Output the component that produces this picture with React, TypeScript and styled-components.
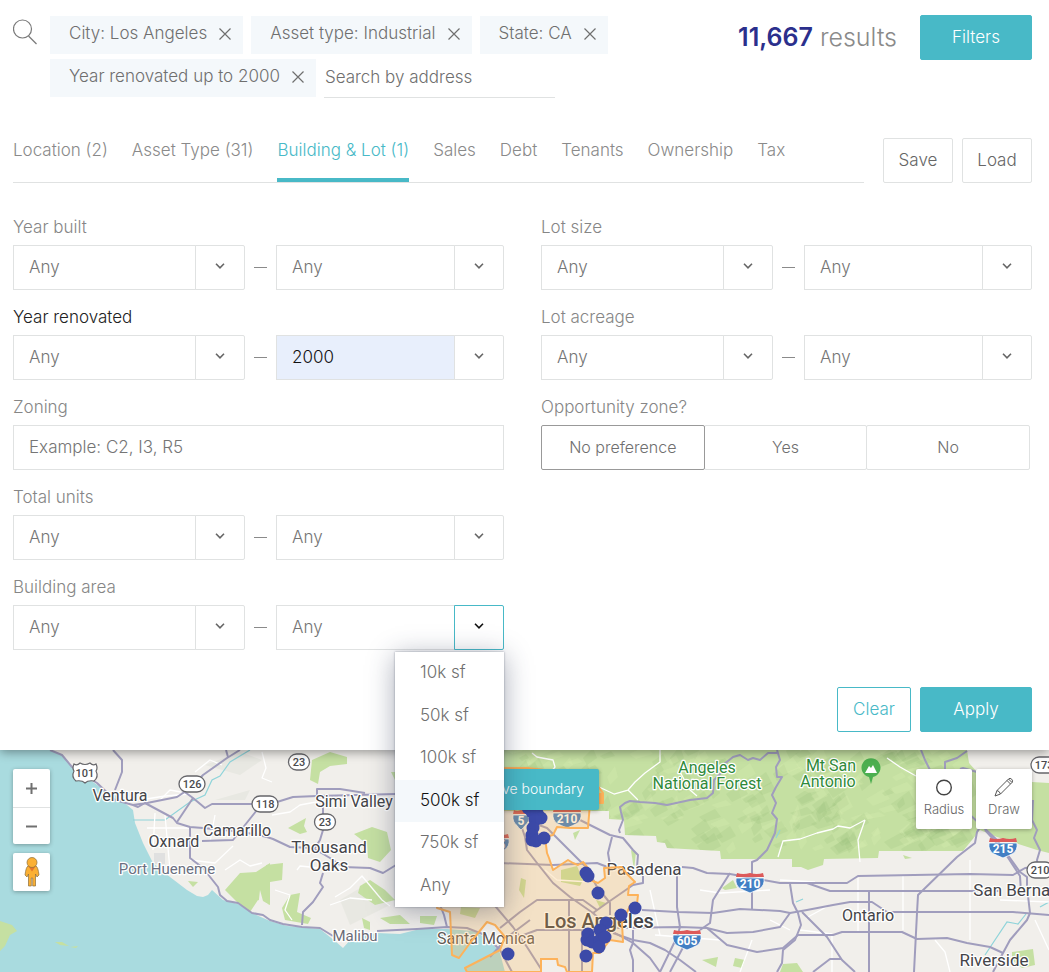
import React, { useState } from "react";
import styled, { createGlobalStyle, css } from "styled-components";

const teal = "#48b9c7";
const line = "#e0e2e2";
const grey = "#6f6f6f";

const GlobalStyle = createGlobalStyle`
  *, *::before, *::after { box-sizing: border-box; }
  body { margin: 0; background: #fff; }
  body, button, input {
    font-family: Inter, "Liberation Sans", sans-serif;
    font-size: 17px;
    font-weight: 300;
    line-height: 24px;
    color: ${grey};
  }
  ul { list-style: none; margin: 0; padding: 0; }
  fieldset { border: 0; margin: 0; padding: 0; min-width: 0; }
`;

const Page = styled.div`
  display: flex;
  flex-direction: column;
  min-height: 100vh;
`;

const Panel = styled.form`
  position: relative;
  z-index: 2;
  padding: 15px 17px 18px 13px;
  background: #fff;
  box-shadow: 0 2px 10px rgba(0, 0, 0, 0.4);
`;

const TopBar = styled.header`
  display: flex;
  align-items: flex-start;
  min-height: 123px;
`;

const SearchIcon = styled.svg`
  flex: none;
  width: 25px;
  height: 26px;
  margin: 4px 12px 0 0;
`;

const ChipList = styled.div`
  flex: 1;
  display: flex;
  flex-wrap: wrap;
  gap: 5px 8px;
  padding-top: 1px;
`;

const Chip = styled.span`
  display: flex;
  align-items: stretch;
  height: 38px;
  padding-left: 19px;
  line-height: 34px;
  background: #f4f8fb;
  white-space: nowrap;
`;

const ChipRemove = styled.button`
  display: flex;
  align-items: center;
  padding: 0 12px 2px;
  border: 0;
  background: none;
  cursor: pointer;
`;

const AddressInput = styled.input`
  width: 231px;
  height: 39px;
  padding: 0 0 2px 1px;
  border: 0;
  border-bottom: 1px solid ${line};
  outline: none;
  background: none;
  &::placeholder { color: ${grey}; opacity: 1; }
`;

const Results = styled.p`
  margin: 0 23px 0 12px;
  font-size: 25px;
  line-height: 44px;
  color: #8a8a8a;
  white-space: nowrap;
  strong { font-weight: 600; color: #2b2f8c; }
`;

const Button = styled.button<{ $kind?: "solid" | "teal" | "plain"; $width: number }>`
  flex: none;
  width: ${(p) => p.$width}px;
  height: 45px;
  padding: 0 0 2px;
  border: 1px solid ${line};
  border-radius: 2px;
  background: #fff;
  color: #666;
  cursor: pointer;
  ${(p) => p.$kind === "solid" && css`background: ${teal}; border-color: ${teal}; color: #fff;`}
  ${(p) => p.$kind === "teal" && css`border-color: ${teal}; color: ${teal};`}
`;

const TabBar = styled.div`
  display: flex;
  align-items: flex-end;
  gap: 9px;
`;

const Tabs = styled.nav`
  flex: 1;
  display: flex;
  gap: 24px;
  height: 45px;
  margin-right: 10px;
  border-bottom: 1px solid ${line};
`;

const Tab = styled.a<{ $active?: boolean }>`
  height: 44px;
  border-bottom: 4px solid ${(p) => (p.$active ? teal : "transparent")};
  color: ${(p) => (p.$active ? teal : "#8a8a8a")};
  text-decoration: none;
  white-space: nowrap;
`;

const Columns = styled.div`
  display: grid;
  grid-template-columns: 1fr 1fr;
  gap: 37px;
  align-items: start;
  padding-top: 32px;
`;

const Column = styled.div`
  display: grid;
  gap: 15px;
`;

const FieldTitle = styled.div<{ $strong?: boolean }>`
  height: 30px;
  padding: 0;
  color: ${(p) => (p.$strong ? "#222" : "#868686")};
`;

const Range = styled.div`
  display: grid;
  grid-template-columns: 232fr 31px 228fr;
`;

const Dash = styled.span`
  align-self: center;
  justify-self: center;
  width: 13px;
  height: 1px;
  background: #8a8a8a;
`;

const Combo = styled.div`
  position: relative;
  display: flex;
  min-width: 0;
`;

const TextInput = styled.input<{ $filled?: boolean }>`
  flex: 1;
  min-width: 0;
  width: 100%;
  height: 45px;
  padding: 0 15px 1px;
  border: 1px solid ${line};
  border-radius: 0;
  outline: none;
  background: ${(p) => (p.$filled ? "#e8effc" : "#fff")};
  color: #111;
  &::placeholder { color: #757575; opacity: 1; }
`;

const Toggle = styled.button<{ $open?: boolean }>`
  flex: none;
  display: flex;
  align-items: center;
  justify-content: center;
  width: 50px;
  height: 45px;
  margin-left: -1px;
  padding: 0 0 4px;
  border: 1px solid ${(p) => (p.$open ? teal : line)};
  border-radius: 0 2px 2px 0;
  background: #fff;
  color: ${(p) => (p.$open ? "#111" : "#666")};
  cursor: pointer;
`;

const Menu = styled.ul`
  position: absolute;
  top: calc(100% + 2px);
  right: 0;
  display: grid;
  grid-auto-rows: 1fr;
  width: 109px;
  height: 255px;
  background: #fff;
  box-shadow: 0 0 2px rgba(60, 70, 90, 0.5), 0 4px 26px rgba(40, 50, 80, 0.4);
`;

const Option = styled.li<{ $active?: boolean }>`
  display: flex;
  align-items: center;
  padding: 0 25px 2px;
  background: ${(p) => (p.$active ? "#f4f8fb" : "transparent")};
  color: ${(p) => (p.$active ? "#111" : grey)};
  white-space: nowrap;
  cursor: pointer;
`;

const Segments = styled.div`
  display: flex;
  margin-right: 2px;
`;

const Segment = styled.label<{ $on: boolean }>`
  position: relative;
  z-index: ${(p) => (p.$on ? 1 : 0)};
  flex: 1;
  height: 45px;
  margin-right: -1px;
  border: 1px solid ${(p) => (p.$on ? "#999" : line)};
  border-radius: 2px;
  font-size: 16px;
  line-height: 43px;
  text-align: center;
  white-space: nowrap;
  cursor: pointer;
  &:last-child { margin-right: 0; }
  input { position: absolute; inset: 0; margin: 0; opacity: 0; }
`;

const Actions = styled.div`
  display: flex;
  justify-content: flex-end;
  gap: 9px;
  margin-top: 37px;
`;

const MapArea = styled.section`
  position: relative;
  flex: 1;
  min-height: 222px;
  overflow: hidden;
  background: #a9dbdf;
`;

const MapCanvas = styled.svg`
  position: absolute;
  inset: 0;
  width: 100%;
  height: 100%;
  font-family: Roboto, "Liberation Sans", sans-serif;
`;

const MapControls = styled.div`
  position: absolute;
  inset: 19px 0 auto;
  display: grid;
  grid-template-columns: 1fr auto 1fr;
  align-items: start;
`;

const LeftControls = styled.div`
  display: grid;
  gap: 9px;
  width: 37px;
  margin-left: 13px;
`;

const RightControls = styled.div`
  display: flex;
  justify-content: flex-end;
  gap: 4px;
  padding-right: 17px;
`;

const ControlCard = styled.div`
  border-radius: 2px;
  background: #fff;
  box-shadow: 0 1px 4px rgba(0, 0, 0, 0.3);
`;

const ControlButton = styled.button`
  display: flex;
  align-items: center;
  justify-content: center;
  width: 37px;
  height: 38px;
  padding: 0;
  border: 0;
  background: none;
  cursor: pointer;
  & + & { height: 37px; border-top: 1px solid ${line}; }
`;

const ToolButton = styled.button`
  display: flex;
  flex-direction: column;
  align-items: center;
  gap: 3px;
  width: 56px;
  height: 60px;
  padding: 8px 0 0;
  border: 0;
  border-radius: 2px;
  background: #fff;
  box-shadow: 0 1px 4px rgba(0, 0, 0, 0.3);
  font-size: 13px;
  line-height: 18px;
  color: #666;
  cursor: pointer;
`;

const BoundaryButton = styled.button`
  height: 41px;
  padding: 0 15px 2px;
  border: 0;
  border-radius: 2px;
  background: ${teal};
  box-shadow: 0 1px 4px rgba(0, 0, 0, 0.3);
  font-size: 14px;
  color: #fff;
  cursor: pointer;
`;

const Chevron = () => (
  <svg width="10" height="6" viewBox="0 0 10 6" fill="none" stroke="currentColor" strokeWidth="1.6" aria-hidden="true">
    <path d="M1 .8 5 4.8 9 .8" />
  </svg>
);

function FilterChip({ text }: { text: string }) {
  return (
    <Chip>
      {text}
      <ChipRemove type="button" aria-label={"Remove " + text}>
        <svg width="12" height="12" viewBox="0 0 12 12" stroke="#6f6f6f" strokeWidth="1.2">
          <path d="M.5.5l11 11M11.5.5l-11 11" />
        </svg>
      </ChipRemove>
    </Chip>
  );
}

const areaOptions = ["10k sf", "50k sf", "100k sf", "500k sf", "750k sf", "Any"];

function ComboBox({ label, value, options }: { label: string; value?: string; options?: string[] }) {
  return (
    <Combo>
      <TextInput aria-label={label} placeholder="Any" defaultValue={value} $filled={!!value} />
      <Toggle type="button" aria-label={label + " options"} aria-expanded={!!options} $open={!!options}>
        <Chevron />
      </Toggle>
      {options && (
        <Menu role="listbox" aria-label={label}>
          {options.map((o) => (
            <Option key={o} role="option" aria-selected={o === "500k sf"} $active={o === "500k sf"}>{o}</Option>
          ))}
        </Menu>
      )}
    </Combo>
  );
}

function RangeField({ title, max, options }: { title: string; max?: string; options?: string[] }) {
  return (
    <fieldset>
      <FieldTitle as="legend" $strong={!!max}>{title}</FieldTitle>
      <Range>
        <ComboBox label={title + " minimum"} />
        <Dash />
        <ComboBox label={title + " maximum"} value={max} options={options} />
      </Range>
    </fieldset>
  );
}

function ZoneField() {
  const [zone, setZone] = useState("No preference");
  return (
    <fieldset>
      <FieldTitle as="legend">Opportunity zone?</FieldTitle>
      <Segments>
        {["No preference", "Yes", "No"].map((z) => (
          <Segment key={z} $on={z === zone}>
            <input type="radio" name="zone" checked={z === zone} onChange={() => setZone(z)} />
            {z}
          </Segment>
        ))}
      </Segments>
    </fieldset>
  );
}

/* ---------- map ---------- */

const highways = [
  "50,750 62,755 72,767 97,783 115,800 133,805 138,807 145,803 173,818 177,823 190,827 203,828 243,832 267,837 273,839 290,847 313,848 330,858 343,867 370,868 383,873 396,865 440,860 500,863 553,865 597,863 610,868",
  "113,750 122,760 122,772 115,790",
  "133,805 147,803 177,797 192,787 203,775 227,758 240,750",
  "226,750 228,757",
  "182,790 193,798 205,808 212,804 253,804 277,802 293,797 317,796 395,794",
  "317,796 317,789 340,789 365,793",
  "193,798 177,822",
  "257,810 233,840 202,841",
  "190,827 190,858 203,868 218,887 220,895 227,901 238,903 252,913 263,915 270,920 283,924 302,927 320,928 333,936",
  "377,931 417,929 447,927 467,928 485,935 500,950 512,972",
  "323,807 323,830 320,840 315,848",
  "323,873 320,883 323,887 313,902 303,912 302,925",
  "440,905 444,915 447,927",
  "682,867 693,868 707,873 730,874 780,883 847,883 858,876 970,874 1013,875 1025,868 1049,866",
  "520,822 525,837 527,850 537,863 553,883 570,897 593,913 603,922 615,933 633,943 650,958 660,972",
  "536,824 547,828 587,868 597,887 610,903 610,915",
  "580,820 610,835 623,838 633,850 638,855 637,867 643,870 643,883 633,885 607,903 593,913",
  "612,837 608,853 610,865",
  "620,833 619,830 623,820 621,812 620,807 625,803 630,801 640,802 655,803 667,805 690,800 707,798 713,793 714,780 722,772 723,765 733,757 740,755 748,760 753,758 760,760 768,753 777,753",
  "777,750 780,760 776,767 777,777 782,777 776,787 772,795 776,803 772,813 777,819 775,833 767,850 757,860 752,862 752,873 752,910",
  "500,928 520,912 537,900 583,900 597,910",
  "569,900 569,972",
  "582,925 582,972",
  "490,900 513,927 527,947 543,972",
  "510,940 537,930 583,930 613,928 680,927 707,928 727,933 753,932 780,927 790,913",
  "490,957 510,935 530,920",
  "642,910 677,912 713,913 740,909 780,911 790,913 807,910 833,905 850,902 872,902 887,912 1013,912 1049,915",
  "677,868 677,907 680,927 677,937 660,972",
  "688,938 670,972",
  "730,873 713,900 710,923 700,930",
  "633,930 633,943 630,950 633,960 633,972",
  "613,933 633,940 650,943 665,950 680,960 696,972",
  "707,928 727,945 757,952 783,948 798,935 833,935 842,932 902,932 917,939 947,938 967,943 990,947 1003,953",
  "790,884 793,903 798,913 801,925 795,940 783,950 782,963 777,972",
  "802,912 827,937 842,960 855,972",
  "813,972 830,959 842,959",
  "869,892 869,972",
  "807,883 830,891 1000,891",
  "983,822 977,832 975,843 957,857 918,895 917,913 914,972",
  "967,812 997,840 1020,872 1027,877 1027,887 1030,913 1027,920 1010,940 1003,953 993,972",
  "985,830 1003,850 1020,876 1021,892",
  "1033,800 1032,820 1037,830 1034,838 1040,850 1037,860 1038,870",
  "921,750 925,760 930,770",
  "945,769 945,762 957,758 967,751",
  "960,769 963,768 977,772",
];

const minorRoads = [
  "532,753 537,757 553,760 555,767 551,772",
  "660,750 660,762 645,773 635,782 628,790 614,794 599,787",
  "628,790 638,800",
  "680,772 690,790 697,796",
  "887,758 900,767 916,776",
  "865,820 850,828 838,826 833,829 817,833 800,839 783,841 778,857",
  "865,820 858,840 860,862",
  "262,752 266,768 262,778 272,782",
  "272,815 290,812 300,805 316,802",
  "297,870 300,866 320,868",
  "147,828 190,828",
  "155,813 153,850",
  "165,815 170,870",
  "140,800 165,796 190,794",
  "190,860 215,863 233,846",
  "225,870 240,860 250,866 262,863",
  "215,815 210,842",
  "275,890 290,895 285,910 292,920",
  "335,897 350,888 362,876 372,888 382,900 390,906",
  "330,905 350,898 372,900",
  "545,870 557,880 590,882",
  "780,880 815,882",
  "752,940 740,972",
  "800,930 832,934",
  "832,935 832,972",
  "903,876 903,930",
  "858,878 858,932",
  "935,940 945,952 950,972",
  "1000,900 1049,902",
  "1035,920 1049,950",
  "970,860 970,940",
  "700,890 720,893 770,890",
  "650,890 660,935",
  "655,935 720,940",
  "830,905 806,918",
  "770,920 790,930",
  "195,772 210,760 222,765",
  "160,800 170,790 181,792",
];

const parks = [
  "225,890 240,873 256,872 270,863 270,905 258,900 250,912 238,903",
  "188,881 198,882 193,887",
  "312,760 330,752 347,757 347,764 330,766 320,772 318,784 310,780",
  "266,865 283,863 282,880 270,882",
  "282,908 290,895 300,893 297,912 311,918 308,924 285,920",
  "288,828 306,818 304,826 307,832 300,834",
  "354,834 372,827 387,832 391,850 380,862 368,858 367,844",
  "360,886 370,880 385,890 395,900 375,905 358,893",
  "380,918 400,915 410,924 390,924",
  "362,918 370,922 370,930 364,928",
  "420,916 437,916 434,925 420,923",
  "461,907 480,908 475,918 460,914",
  "561,870 577,866 583,880 580,886 561,882",
  "521,878 526,880 524,898 519,890",
  "573,833 580,830 575,840",
  "596,900 606,903 600,908",
  "631,850 636,852 634,870",
  "722,888 733,880 737,888 725,890",
  "702,960 718,957 716,967",
  "735,958 745,960 742,968 733,966",
  "903,855 912,858 905,859",
  "1012,952 1033,949 1035,965 1022,968 1012,960",
  "783,964 797,963 803,972 780,972",
  "391,772 396,772 396,782",
];

const dots: [number, number][] = [
  [528, 808], [532, 812], [537, 813], [541, 818], [535, 820], [533, 828], [532, 835], [532, 840], [536, 841], [544, 838],
  [586, 873], [588, 876], [598, 893], [635, 908], [621, 915], [606, 923], [600, 930], [588, 934], [587, 940], [592, 942],
  [600, 940], [605, 937], [599, 947], [586, 956], [508, 954],
];

/* Seeded facets give the mountain range its relief. */
const facets = (() => {
  const out: { d: string; dark: boolean }[] = [];
  let s = 7;
  const rnd = () => (s = (s * 16807) % 2147483647) / 2147483647;
  for (let i = 0; i < 230; i++) {
    const x = 505 + rnd() * 460;
    const y = 750 + rnd() * 100;
    const w = 6 + rnd() * 13;
    const h = 4 + rnd() * 9;
    out.push({ d: `M${x.toFixed(0)} ${y.toFixed(0)}l${w.toFixed(0)} ${(-h).toFixed(0)}l${(w * 0.4).toFixed(0)} ${h.toFixed(0)}l${(-w).toFixed(0)} ${(h * 0.7).toFixed(0)}z`, dark: rnd() > 0.4 });
  }
  return out;
})();

const forest =
  "M490 750H967L969 763 977 772 1032 782 1049 783V853L1037 850 997 837 980 830 972 840 963 851H879L878 858 824 859 823 865 808 870 801 867H792V859H721L720 851 667 848 665 843 657 842 656 836 625 835 624 820 609 819V811H490Z";

const laBoundary =
  "M470 768H527L590 775 603 793V803H590L588 828 570 828 557 827 553 835 545 837 547 853 549 858 553 870 568 860 573 863 578 865 583 862 592 873 590 880 598 883 605 878 604 868 622 867 627 874 635 882 629 886 628 895H638L637 904 630 906 622 923 623 942 610 940 600 953H593L592 972H467L465 968 500 950 505 937 495 925 487 922 470 943 459 958 452 955 450 912 437 908V800Z";

const labels: { t: string; x: number; y: number; s?: number; w?: number; c?: string }[] = [
  { t: "Ventura", x: 120, y: 801 },
  { t: "Camarillo", x: 237, y: 836 },
  { t: "Oxnard", x: 174, y: 847 },
  { t: "Port Hueneme", x: 167, y: 874, c: "#6b6f80", s: 15 },
  { t: "Simi Valley", x: 354, y: 807 },
  { t: "Thousand", x: 329, y: 853, s: 17 },
  { t: "Oaks", x: 329, y: 871, s: 17 },
  { t: "Malibu", x: 355, y: 941, c: "#6b6b76", s: 15 },
  { t: "Santa Monica", x: 486, y: 944, c: "#5f5a55" },
  { t: "Pasadena", x: 644, y: 875, s: 17 },
  { t: "Los Angeles", x: 599, y: 928, s: 20, w: 500 },
  { t: "Angeles", x: 707, y: 773, c: "#2f8a3a" },
  { t: "National Forest", x: 707, y: 789, c: "#2f8a3a" },
  { t: "Mt San", x: 831, y: 771, c: "#2f8a3a" },
  { t: "Antonio", x: 828, y: 787, c: "#2f8a3a" },
  { t: "San Bernardino", x: 1031, y: 896, s: 17 },
  { t: "Ontario", x: 868, y: 921 },
  { t: "Riverside", x: 994, y: 966, s: 17 },
];

function Interstate({ x, y, n }: { x: number; y: number; n: string }) {
  const w = n.length > 2 ? 14 : 8;
  return (
    <g transform={`translate(${x} ${y})`}>
      <path d={`M${-w} -4Q${-w - 1} 3 ${-w + 4} 6.500Q${-w / 2 + 1} 8.500 0 11Q${w / 2 - 1} 8.500 ${w - 4} 6.500Q${w + 1} 3 ${w} -4Z`} fill="#427fc4" stroke="#fff" strokeWidth="0.8" />
      <path d={`M${-w} -5L${-w + 1} -9Q${-w / 2} -7 0 -9Q${w / 2} -7 ${w - 1} -9L${w} -5Z`} fill="#dd5a5a" />
      <text y="6" textAnchor="middle" fontSize="12" fontWeight="700" fill="#fff">{n}</text>
    </g>
  );
}

function StateRoute({ x, y, n }: { x: number; y: number; n: string }) {
  const w = n.length > 2 ? 26 : 21;
  return (
    <g transform={`translate(${x} ${y})`}>
      <rect x={-w / 2} y="-8" width={w} height="16" rx="8" fill="#fff" stroke="#66666a" strokeWidth="1.3" />
      <text y="4" textAnchor="middle" fontSize="11" fontWeight="500" fill="#4a4a4e">{n}</text>
    </g>
  );
}

function RegionMap() {
  return (
    <MapCanvas viewBox="0 750 1049 222" preserveAspectRatio="xMidYMid slice" role="img" aria-label="Map of the Los Angeles region">
      <defs>
        <clipPath id="forest"><path d={forest} /></clipPath>
      </defs>
      <rect y="750" width="1049" height="222" fill="#a9dbdf" />
      <path
        d="M50 750L62 755 72 767 100 787 115 795 133 810 135 823 143 843 153 863 170 877 187 890 197 896 203 897 208 895 212 890 223 900 238 904 252 913 270 921 287 926 320 929 335 941 343 948 352 938 377 933 400 934 420 929 447 929 473 931 490 940 500 953 505 972H1049V750Z"
        fill="#f1efeb"
      />
      <path d="M0 921L12 925 17 931 10 935 5 946 0 951ZM55 942L62 942 69 946 60 945ZM70 947L78 946 76 948Z" fill="#c5e0a2" />
      <path d="M154 853H165V864H154Z" fill="#e0e0e0" />
      <path d="M205 765L240 752 262 760 240 775ZM215 800L250 790 245 800ZM340 900L365 885 390 905 350 925Z" fill="#e8e8e2" />
      <g fill="#c5e0a2">
        {parks.map((p) => <polygon key={p} points={p} />)}
        <path d={forest} />
      </g>
      <path d="M260 890L263 901 268 904 258 908Z" fill="#f1efeb" />
      <g clipPath="url(#forest)">
        {facets.map((f, i) => <path key={i} d={f.d} fill={f.dark ? "#86b46a" : "#dcefb4"} opacity={f.dark ? 0.14 : 0.25} />)}
      </g>
      <g fill="none" stroke="#8fd4da" strokeWidth="1.200">
        <path d="M133 820H165L190 802 205 795 212 780 220 776 230 762 250 750M985 955L1007 922 1018 924 1026 914M1040 907L1049 902M796 902L803 899M776 838L780 830" />
      </g>
      <g fill="none" stroke="#fff" strokeWidth="1.300" strokeLinejoin="round">
        {minorRoads.map((p) => <polyline key={p} points={p} />)}
      </g>
      <g fill="none" stroke="#a09dbd" strokeWidth="2" strokeLinejoin="round">
        {highways.map((p) => <polyline key={p} points={p} />)}
      </g>
      <g textAnchor="middle" paintOrder="stroke" stroke="#fff" strokeWidth="2.500" strokeLinejoin="round">
        {labels.map((l) => (
          <text key={l.t} x={l.x} y={l.y} fontSize={l.s ?? 16} fontWeight={l.w ?? 400} fill={l.c ?? "#444448"}>{l.t}</text>
        ))}
      </g>
      <Interstate x={521} y={819} n="5" />
      <Interstate x={495} y={843} n="405" />
      <Interstate x={567} y={817} n="210" />
      <path d={laBoundary} fill="#fbb450" fillOpacity="0.24" stroke="#fdb25a" strokeWidth="2" strokeLinejoin="round" />
      <path d="M541 972V959H557L558 965 565 967 567 972" fill="#f1efeb" stroke="#fdb25a" strokeWidth="2" />
      <path d="M596 793H603V803H596Z" fill="#fdb25a" />
      <Interstate x={750} y={882} n="210" />
      <Interstate x={687} y={939} n="605" />
      <Interstate x={1003} y={847} n="215" />
      <path d="M74 764Q77 766 80 763Q85 766 90 763Q93 766 96 764Q98 768 96 771Q99 777 94 781Q88 780 85 783Q82 780 76 781Q71 777 74 771Q72 768 74 764Z" fill="#fff" stroke="#66666a" strokeWidth="1.200" />
      <text x="85" y="777" textAnchor="middle" fontSize="11" fontWeight="500" fill="#4a4a4e">101</text>
      <StateRoute x={299} y={762} n="23" />
      <StateRoute x={192} y={784} n="126" />
      <StateRoute x={265} y={804} n="118" />
      <StateRoute x={325} y={822} n="23" />
      <StateRoute x={1040} y={870} n="210" />
      <StateRoute x={1044} y={765} n="173" />
      <path d="M871 784L869 777A9.500 9.500 0 1 1 873 777Z" fill="#4caf50" />
      <path d="M865 773L869 766 871 768 873 765 877 773Z" fill="#fff" />
      <g fill="#3c4aa8">
        {dots.map(([x, y]) => <circle key={x + "-" + y} cx={x} cy={y} r="6.500" />)}
      </g>
    </MapCanvas>
  );
}

const tabs = ["Location (2)", "Asset Type (31)", "Building & Lot (1)", "Sales", "Debt", "Tenants", "Ownership", "Tax"];

export default function App() {
  return (
    <Page>
      <GlobalStyle />
      <Panel onSubmit={(e) => e.preventDefault()}>
        <TopBar>
          <SearchIcon viewBox="0 0 25 26" fill="none" stroke="#7a7a7a" strokeWidth="1.200" aria-hidden="true">
            <circle cx="9.500" cy="10" r="9" />
            <path d="M15.500 17L23.500 25" />
          </SearchIcon>
          <ChipList>
            <FilterChip text="City: Los Angeles" />
            <FilterChip text="Asset type: Industrial" />
            <FilterChip text="State: CA" />
            <FilterChip text="Year renovated up to 2000" />
            <AddressInput type="search" aria-label="Search by address" placeholder="Search by address" />
          </ChipList>
          <Results><strong>11,667</strong> results</Results>
          <Button type="button" $kind="solid" $width={112}>Filters</Button>
        </TopBar>
        <TabBar>
          <Tabs aria-label="Filter groups">
            {tabs.map((t, i) => <Tab key={t} href="#" $active={i === 2}>{t}</Tab>)}
          </Tabs>
          <Button type="button" $width={70}>Save</Button>
          <Button type="button" $width={70}>Load</Button>
        </TabBar>
        <Columns>
          <Column>
            <RangeField title="Year built" />
            <RangeField title="Year renovated" max="2000" />
            <div>
              <FieldTitle><label htmlFor="zoning">Zoning</label></FieldTitle>
              <Combo><TextInput id="zoning" placeholder="Example: C2, I3, R5" /></Combo>
            </div>
            <RangeField title="Total units" />
            <RangeField title="Building area" options={areaOptions} />
          </Column>
          <Column>
            <RangeField title="Lot size" />
            <RangeField title="Lot acreage" />
            <ZoneField />
          </Column>
        </Columns>
        <Actions>
          <Button type="reset" $kind="teal" $width={74}>Clear</Button>
          <Button type="submit" $kind="solid" $width={112}>Apply</Button>
        </Actions>
      </Panel>
      <MapArea>
        <RegionMap />
        <MapControls>
          <LeftControls>
            <ControlCard>
              <ControlButton type="button" aria-label="Zoom in">
                <svg width="11" height="11" viewBox="0 0 11 11" stroke="#707070" strokeWidth="2"><path d="M0 5.500H11M5.500 0V11" /></svg>
              </ControlButton>
              <ControlButton type="button" aria-label="Zoom out">
                <svg width="11" height="11" viewBox="0 0 11 11" stroke="#707070" strokeWidth="2"><path d="M0 5.500H11" /></svg>
              </ControlButton>
            </ControlCard>
            <ControlCard>
              <ControlButton type="button" aria-label="Street view">
                <svg width="18" height="30" viewBox="0 0 18 30" fill="#fbb034" stroke="#8a6d3b" strokeWidth="0.700">
                  <path d="M5 9H13Q15 10 16 18L14 20 12.500 17V29H9.700V21H8.300V29H5.500V17L4 20 2 18Q3 10 5 9Z" />
                  <path d="M5.500 9.500L9 14.500 12.500 9.500Z" fill="#e5762c" stroke="none" />
                  <circle cx="9" cy="5.500" r="5" />
                </svg>
              </ControlButton>
            </ControlCard>
          </LeftControls>
          <BoundaryButton type="button">Remove boundary</BoundaryButton>
          <RightControls>
            <ToolButton type="button">
              <svg width="20" height="20" viewBox="0 0 20 20" fill="none" stroke="#444" strokeWidth="1.400"><circle cx="10" cy="10.500" r="7.300" /></svg>
              Radius
            </ToolButton>
            <ToolButton type="button">
              <svg width="20" height="20" viewBox="0 0 20 20" fill="none" stroke="#555" strokeWidth="1" strokeLinejoin="round">
                <path d="M1 19L3 13.500 14.500 2Q16 .5 17.700 2.200T18 5.500L6.500 17ZM3 13.500Q5.500 14 6.500 17M13 3.500L16.500 7M14.500 2L18 5.500" />
              </svg>
              Draw
            </ToolButton>
          </RightControls>
        </MapControls>
      </MapArea>
    </Page>
  );
}
